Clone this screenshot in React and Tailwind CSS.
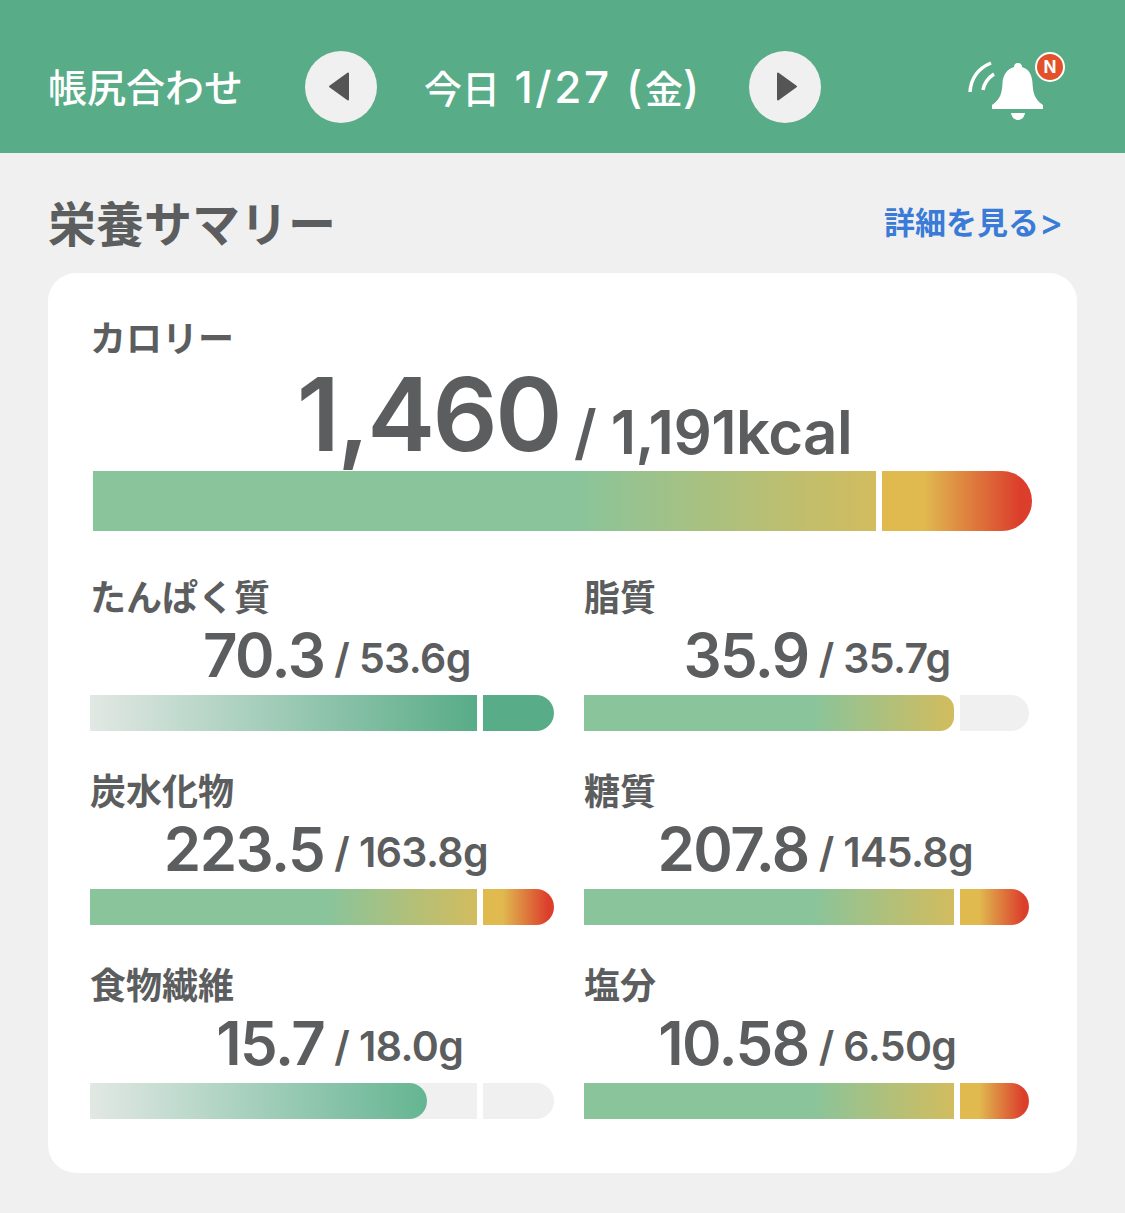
const CJK = "font-['Inter','Noto_Sans_CJK_JP',sans-serif]"

const NUTRIENTS = [
  { label: "たんぱく質", value: "70.3", target: "53.6g", kind: "high" },
  { label: "脂質", value: "35.9", target: "35.7g", kind: "full" },
  { label: "炭水化物", value: "223.5", target: "163.8g", kind: "over" },
  { label: "糖質", value: "207.8", target: "145.8g", kind: "over" },
  { label: "食物繊維", value: "15.7", target: "18.0g", kind: "low" },
  { label: "塩分", value: "10.58", target: "6.50g", kind: "over" },
]

const warmLeft = "bg-linear-to-r/srgb from-[#8ac49a] from-62% to-[#d2bc5e]"
const warmRight = "bg-linear-to-r/srgb from-[#e0b94f] from-28% to-[#dc3e2c] to-92%"

function Bar({ kind, height, rightWidth }) {
  let left = <div className={`flex-1 ${warmLeft}`} />
  let right = <div className={`rounded-r-full ${warmRight}`} style={{ width: rightWidth }} />

  if (kind === "high") {
    left = <div className="flex-1 bg-linear-to-r/srgb from-[#e2e8e4] to-[#58ac87]" />
    right = <div className="rounded-r-full bg-[#58ac87]" style={{ width: rightWidth }} />
  }
  if (kind === "full") {
    left = <div className={`flex-1 rounded-r-[14px] ${warmLeft}`} />
    right = <div className="rounded-r-full bg-[#f0f0f0]" style={{ width: rightWidth }} />
  }
  if (kind === "low") {
    left = (
      <div className="flex-1 bg-[#f0f0f0]">
        <div className="h-full w-[87%] rounded-r-full bg-linear-to-r/srgb from-[#e2e8e4] to-[#64b592]" />
      </div>
    )
    right = <div className="rounded-r-full bg-[#f0f0f0]" style={{ width: rightWidth }} />
  }

  return (
    <div className="flex gap-[6px]" style={{ height }}>
      {left}
      {right}
    </div>
  )
}

function Triangle({ dir }) {
  return (
    <svg
      width="24"
      height="32"
      viewBox="0 0 24 32"
      className={dir === "left" ? "mr-[4px] block" : "ml-[4px] block"}
    >
      <path
        d={dir === "left" ? "M21 2.5 L3 15.5 L21 28.5 Z" : "M3 2.5 L21 15.5 L3 28.5 Z"}
        fill="#555555"
        stroke="#555555"
        strokeWidth="2"
        strokeLinejoin="round"
      />
    </svg>
  )
}

function ArrowButton({ dir }) {
  return (
    <button className="flex h-[72px] w-[72px] shrink-0 items-center justify-center rounded-full bg-[#f0f0f0]">
      <Triangle dir={dir} />
    </button>
  )
}

function Bell() {
  return (
    <div className="relative ml-[144px] mt-[6px] h-[64px] w-[80px] shrink-0">
      <svg width="80" height="64" viewBox="0 0 80 64" className="block">
        <path
          d="M53 5 C50 5 49 7 49 9 C42 11 38 17 37.5 25 C37 34 36 41 27 47 V51 H78 V47 C69 41 68 34 67.5 25 C67 17 64 11 57 9 C57 7 56 5 53 5Z"
          fill="white"
        />
        <path d="M46 55 H60 C59 60 56 62 53 62 C50 62 47 60 46 55Z" fill="white" />
        <path d="M5 34 C6 20 14 10 26 5" fill="none" stroke="white" strokeWidth="3.5" />
        <path d="M18 32 C19 26 23 20 29 16" fill="none" stroke="white" strokeWidth="3.5" />
      </svg>
      {/* N badge */}
      <div className="absolute left-[70px] top-[-6px] flex h-[30px] w-[30px] items-center justify-center rounded-full border-[2px] border-white bg-[#e2512a] text-[17px] font-bold leading-none text-white">
        N
      </div>
    </div>
  )
}

function NutrientCell({ item, rightWidth }) {
  return (
    <div>
      <div className="h-[36px] pt-[1px] text-[36px] font-bold leading-[36px] text-[#5b5d5e]">{item.label}</div>
      <div className="flex h-[80px] items-center text-[#5b5d5e]">
        <div className="w-[50.5%] shrink-0 text-right text-[60px] font-semibold leading-none tracking-[-0.025em]">
          {item.value}
        </div>
        <div className="whitespace-nowrap pl-[10px] pt-[6px] text-[41px] font-semibold leading-none tracking-[-0.015em]">
          / {item.target}
        </div>
      </div>
      <Bar kind={item.kind} height={36} rightWidth={rightWidth} />
    </div>
  )
}

export default function App() {
  return (
    <div className={`min-h-[1213px] bg-[#f0f0f0] ${CJK}`}>
      <header className="flex h-[153px] items-center bg-[#58ac87] pl-[48px] pt-[21px] text-white">
        <div className="w-[257px] shrink-0 text-[39px] font-medium leading-none">帳尻合わせ</div>
        <ArrowButton dir="left" />
        <div className="w-[372px] shrink-0 whitespace-nowrap pl-[47px] text-[38px] font-medium leading-none">
          今日<span className="text-[44px] tracking-[0.06em]"> 1/27 (</span>金<span className="text-[44px]">)</span>
        </div>
        <ArrowButton dir="right" />
        <Bell />
      </header>

      <div className="flex h-[120px] items-center justify-between pl-[48px] pr-[62px] pt-[24px]">
        <h2 className="text-[48px] font-bold leading-none text-[#5b5d5e]">栄養サマリー</h2>
        <a className="mb-[6px] flex items-center text-[31px] font-bold leading-none text-[#3b7bd8]">
          詳細を見る<span className="text-[36px] font-medium">&gt;</span>
        </a>
      </div>

      <div className="mx-[48px] rounded-[28px] bg-white pb-[54px] pl-[42px] pr-[48px] pt-[48px]">
        <div className="h-[36px] text-[36px] font-bold leading-[36px] text-[#5b5d5e]">カロリー</div>
        <div className="ml-[3px] w-[939px]">
          <div className="flex h-[114px] items-center text-[#5b5d5e]">
            <div className="w-[467px] shrink-0 text-right text-[102px] font-semibold leading-none tracking-[-0.025em]">
              1,460
            </div>
            <div className="whitespace-nowrap pl-[14px] pt-[36px] text-[60px] font-semibold leading-none tracking-[-0.01em]">
              / 1,191kcal
            </div>
          </div>
          <Bar kind="over" height={60} rightWidth={150} />
        </div>

        <div className="mt-[48px] grid grid-cols-[464px_445px] gap-x-[30px] gap-y-[42px]">
          {NUTRIENTS.map((item, i) => (
            <NutrientCell key={i} item={item} rightWidth={i % 2 === 0 ? 71 : 69} />
          ))}
        </div>
      </div>
    </div>
  )
}
